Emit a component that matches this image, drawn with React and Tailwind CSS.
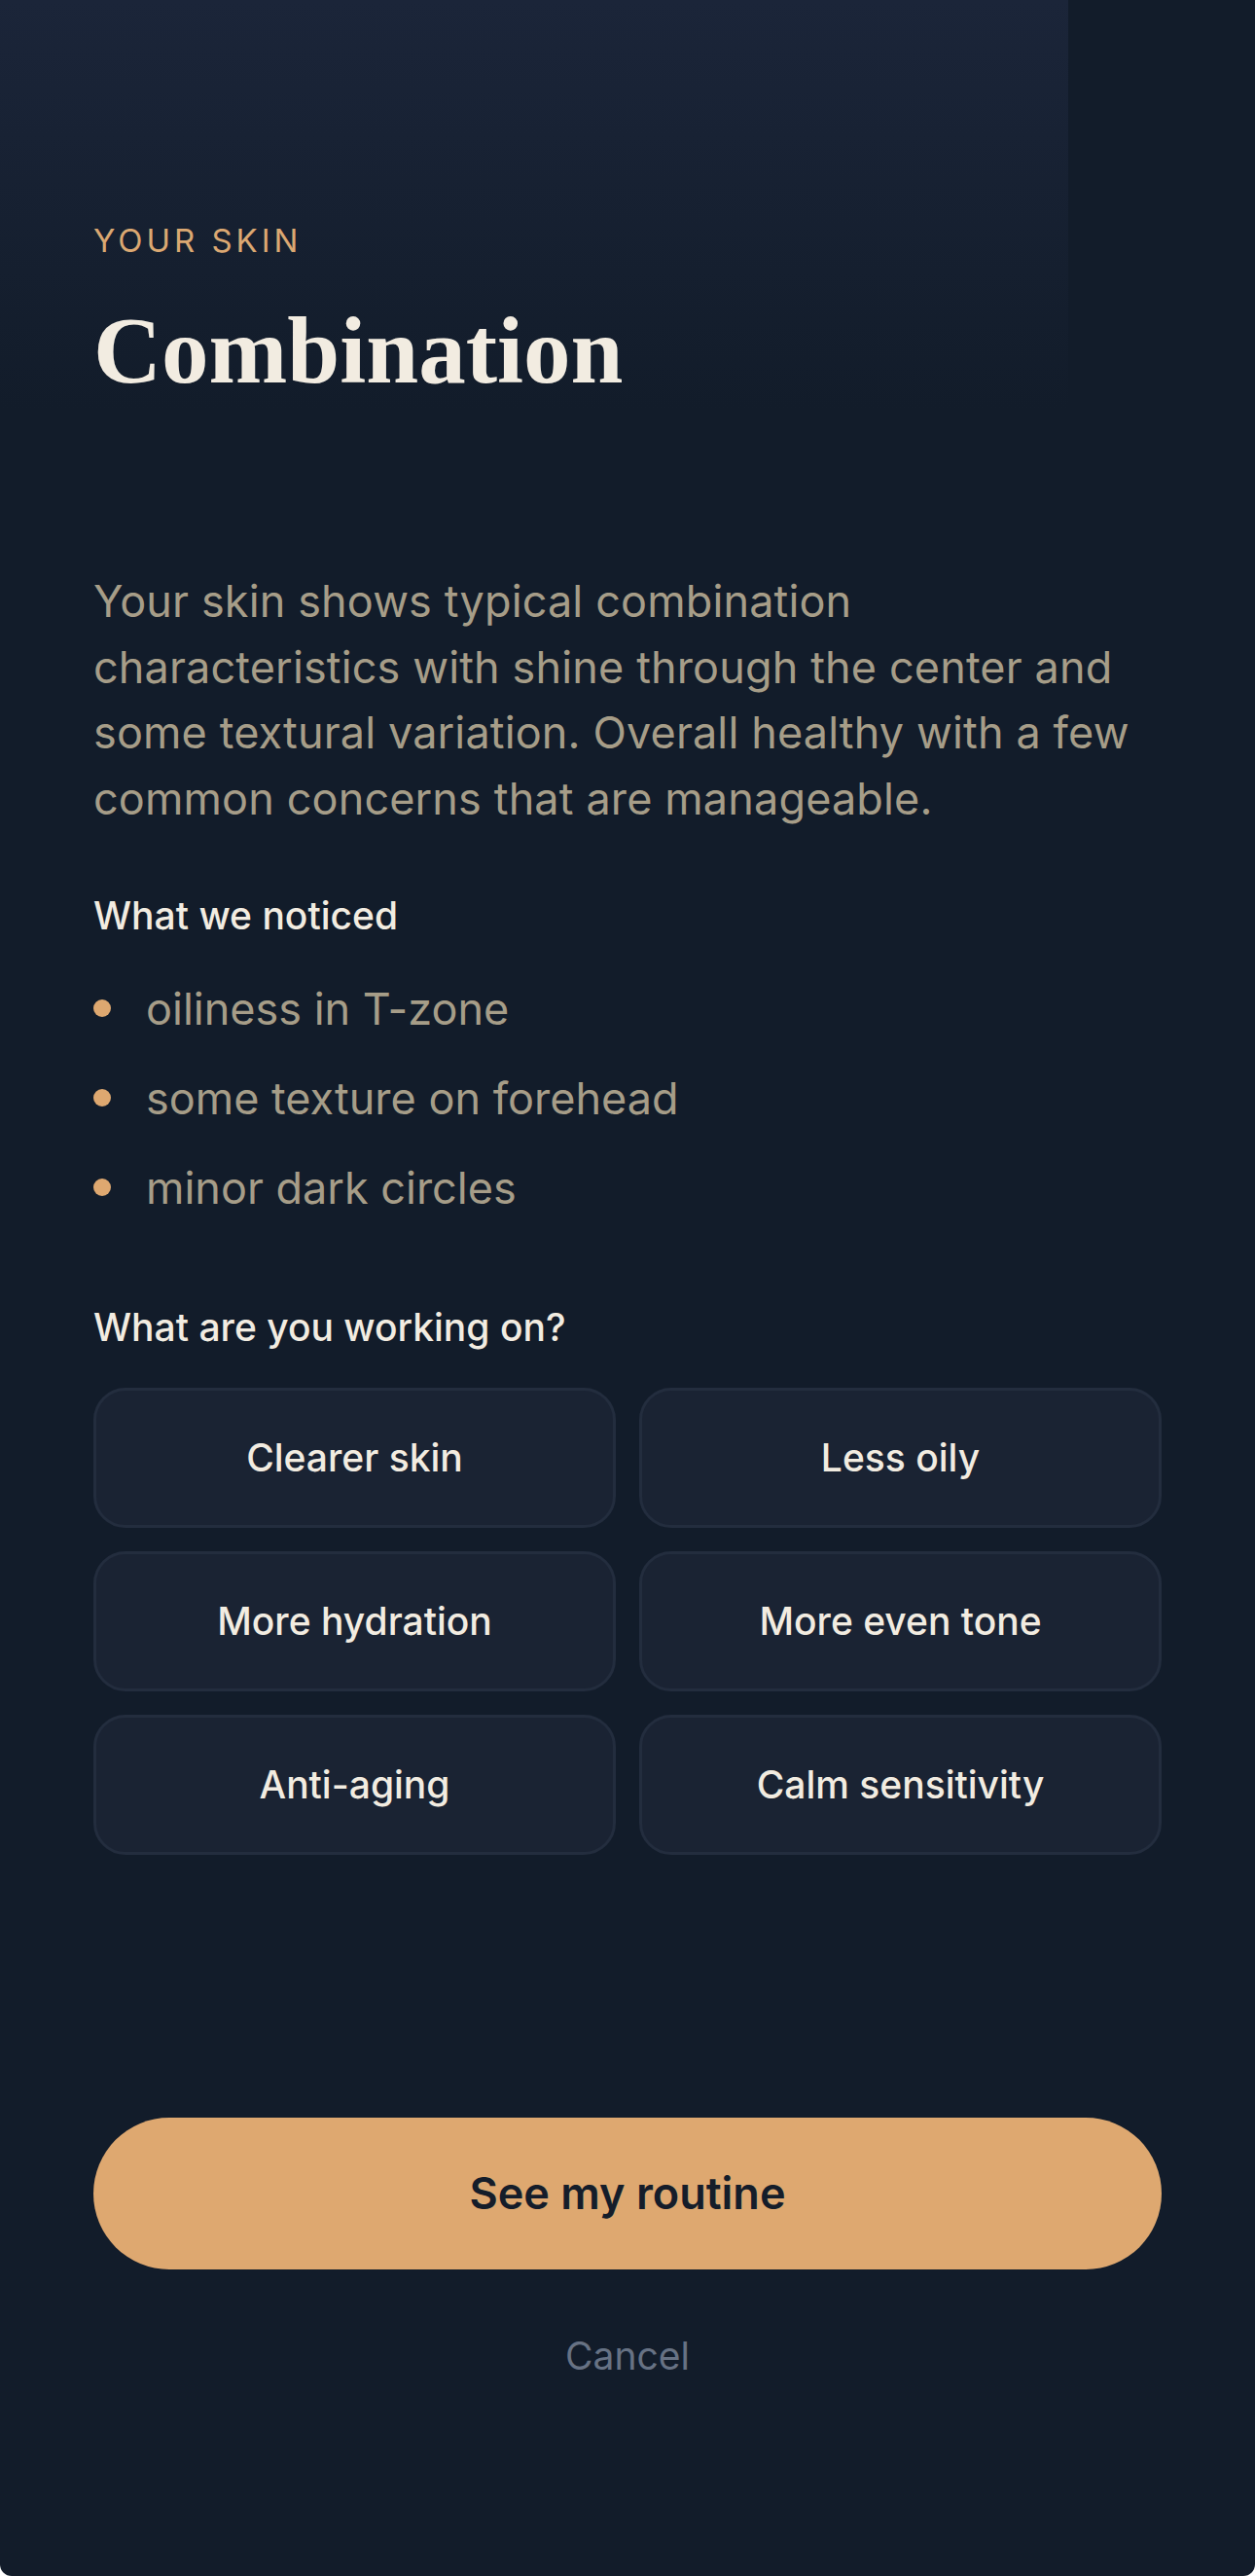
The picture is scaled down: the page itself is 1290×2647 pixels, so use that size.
import React from "react";

const goals = [
  "Clearer skin",
  "Less oily",
  "More hydration",
  "More even tone",
  "Anti-aging",
  "Calm sensitivity",
];

const noticed = ["oiliness in T-zone", "some texture on forehead", "minor dark circles"];

export default function App() {
  return (
    <div className="relative w-full h-[2647px] bg-[#121c2a] rounded-b-[12px] overflow-hidden font-[Inter,sans-serif]">
      <div className="absolute top-0 left-0 w-[1098px] h-[420px] bg-linear-to-b from-[#1b2539] to-[#121c2a]" />
      <div className="relative flex flex-col px-[96px] pt-[231px]">
        <div className="text-[33px] leading-[33px] tracking-[0.12em] text-[#dba872] uppercase">
          Your skin
        </div>
        <h1 className="mt-[49px] font-['Liberation_Serif',serif] font-bold text-[97px] leading-[96px] text-[#f2ece1]">
          Combination
        </h1>
        <p className="mt-[175px] text-[45px] leading-[67.5px] tracking-[0.003em] text-[#a69d88]">
          Your skin shows typical combination characteristics with shine through the center and some textural variation. Overall healthy with a few common concerns that are manageable.
        </p>
        <h2 className="mt-[58px] text-[39px] leading-[58.5px] font-medium text-[#f2ece1]">
          What we noticed
        </h2>
        <ul className="mt-[34px] flex flex-col gap-[29px]">
          {noticed.map((n) => (
            <li key={n} className="flex items-center gap-[36px]">
              <span className="w-[18px] h-[18px] rounded-full bg-[#dea870] shrink-0" />
              <span className="text-[45px] leading-[63px] text-[#a69d88]">{n}</span>
            </li>
          ))}
        </ul>
        <h2 className="mt-[83px] text-[39px] leading-[58.5px] font-medium text-[#f2ece1]">
          What are you working on?
        </h2>
        <div className="mt-[33px] grid grid-cols-2 gap-[24px]">
          {goals.map((g) => (
            <button
              key={g}
              className="h-[144px] rounded-[33px] border-[3px] border-[#232d3e] bg-[#1a2333] flex items-center justify-center text-[39px] font-medium text-[#f2ece1]"
            >
              {g}
            </button>
          ))}
        </div>
        <button className="mt-[270px] h-[156px] w-full rounded-full bg-[#dea870] flex items-center justify-center text-[45px] font-semibold text-[#151d2a]">
          See my routine
        </button>
        <div className="mt-[60px] text-center text-[39px] leading-[58.5px] text-[#677284]">
          Cancel
        </div>
      </div>
    </div>
  );
}
